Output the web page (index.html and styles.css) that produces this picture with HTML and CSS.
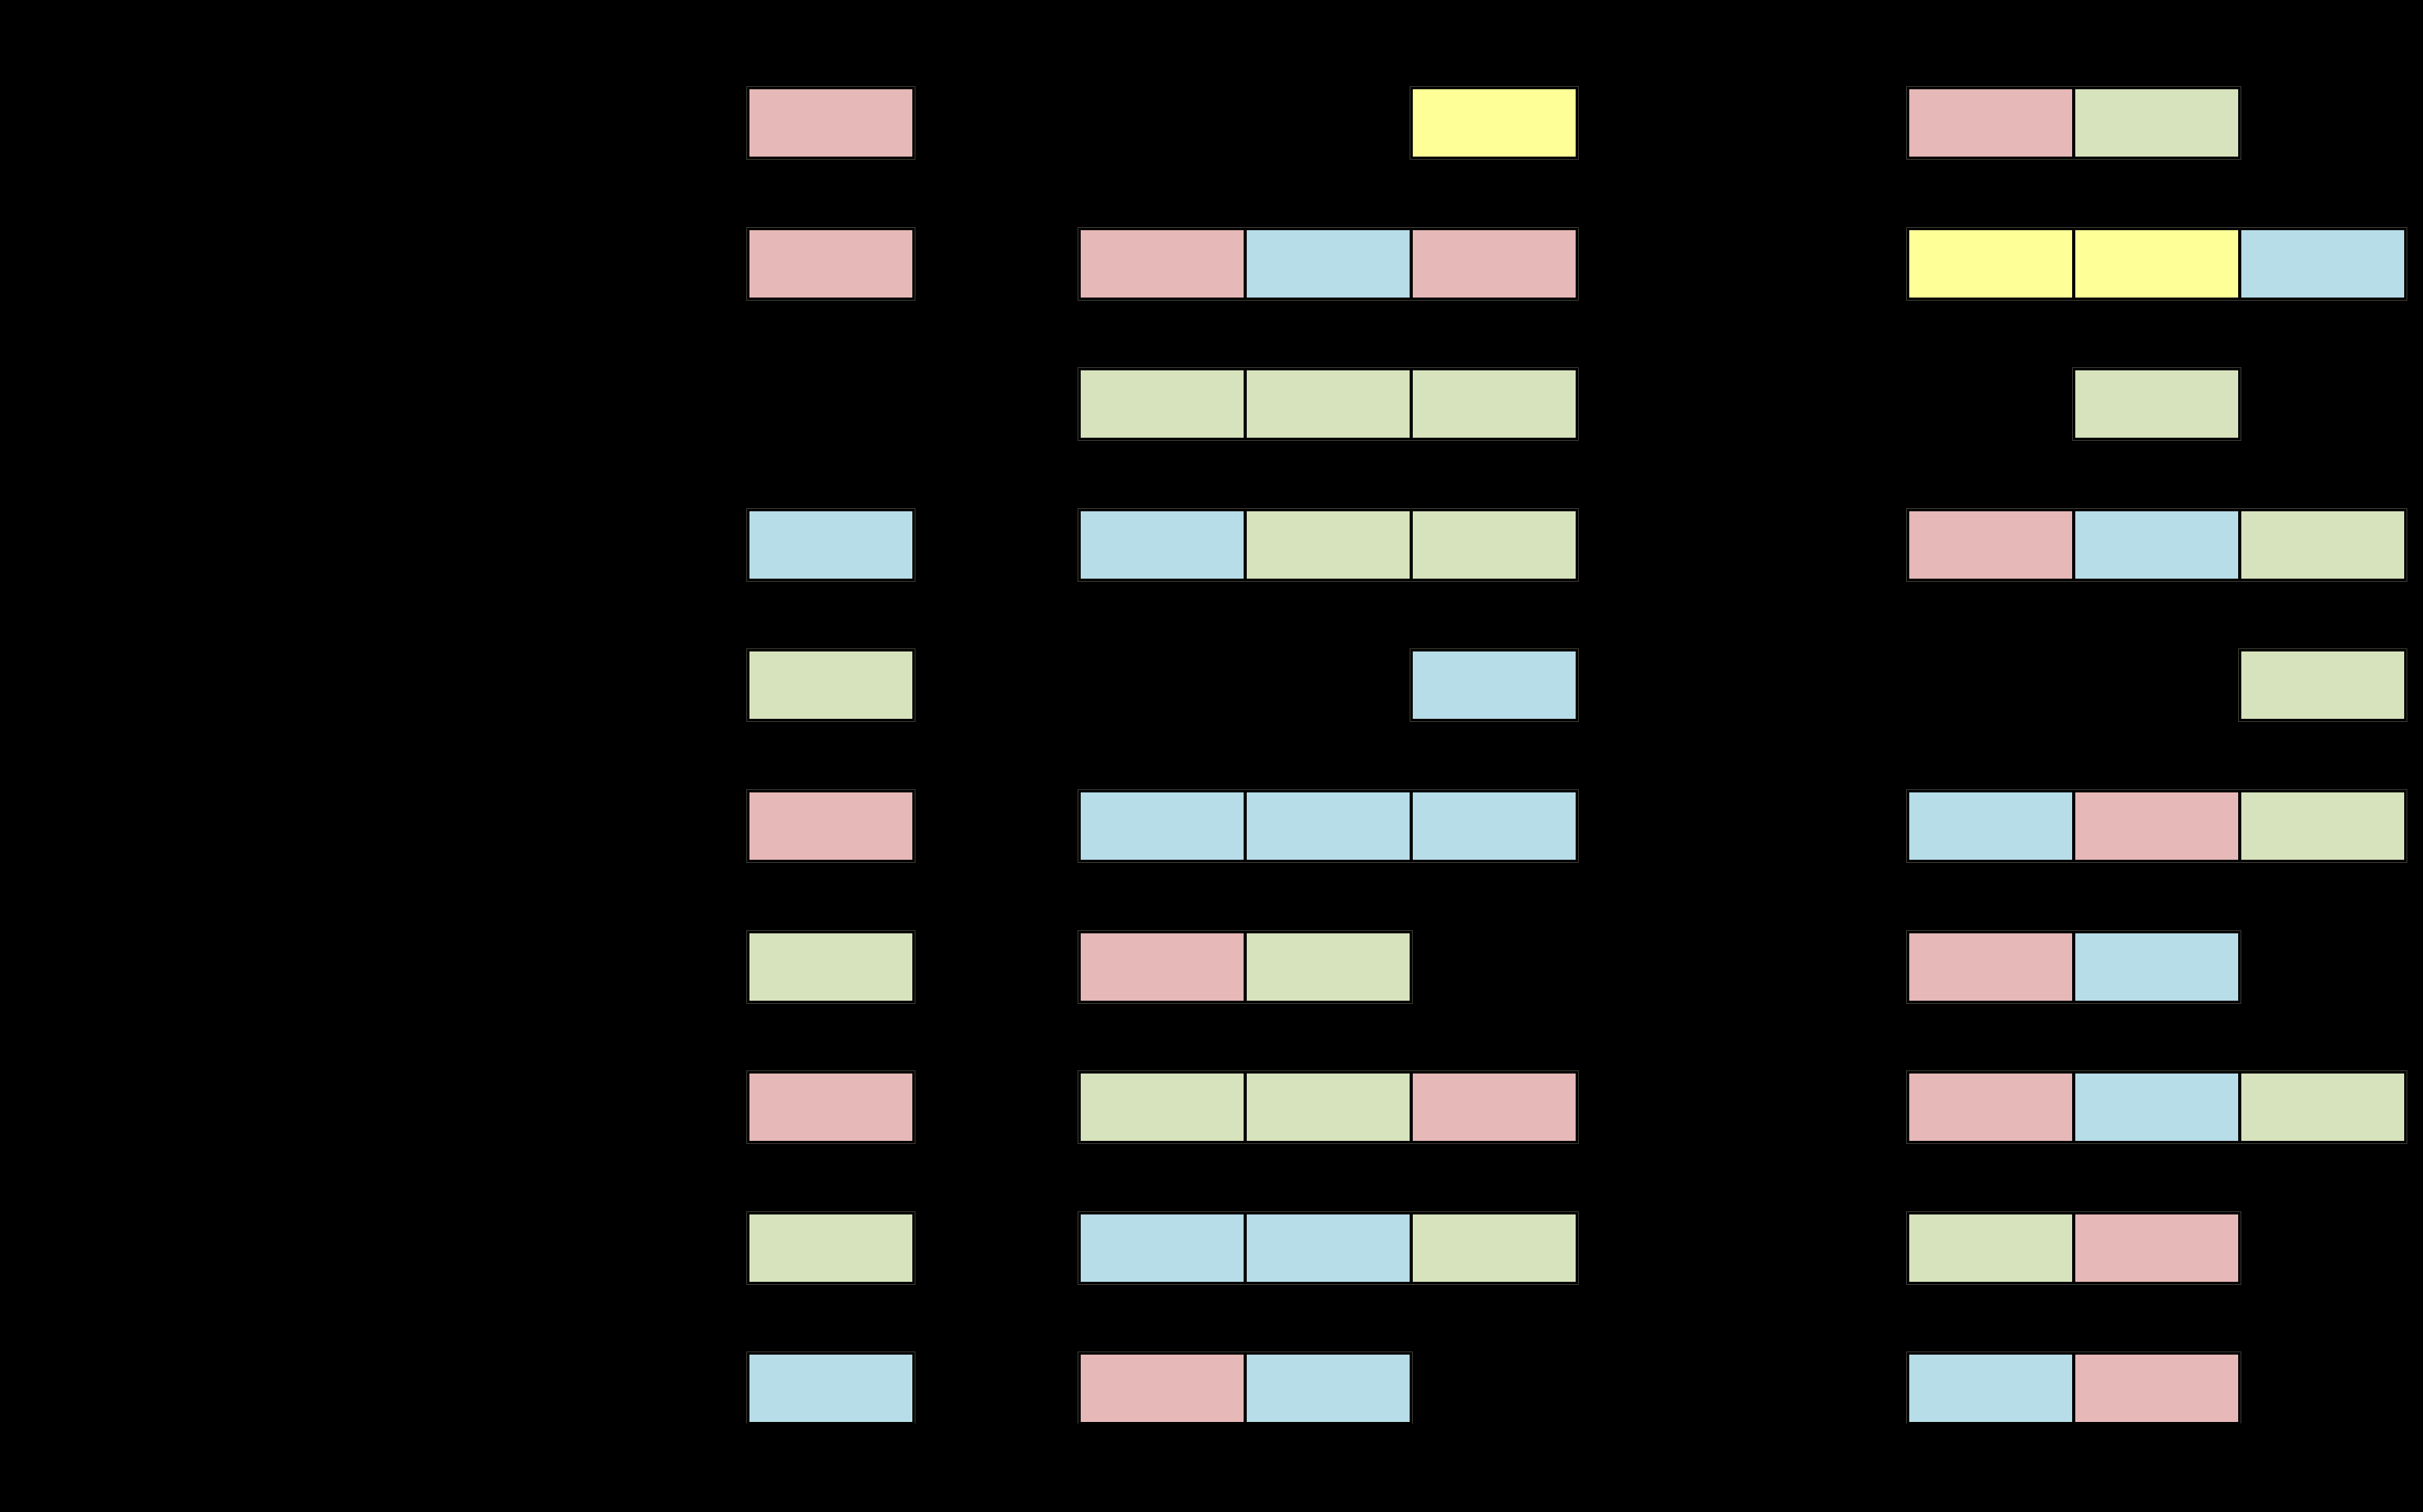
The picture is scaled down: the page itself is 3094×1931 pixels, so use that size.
FILE: index.html
```html
<!DOCTYPE html>
<html lang="en">
<head>
    <meta charset="UTF-8">
    <meta name="viewport" content="width=device-width, initial-scale=1.0">
    <title>Item Grid</title>
    <link rel="stylesheet" href="styles.css">
</head>
<body>

    <div class="board">
        <!-- row 1 -->
        <div class="row">
            <div class="label"></div>
            <div class="group one"><div class="run"><div class="cell pink"></div></div></div>
            <div class="group mid">
                <div class="cell empty"></div>
                <div class="cell empty"></div>
                <div class="run"><div class="cell yellow"></div></div>
            </div>
            <div class="group last">
                <div class="run"><div class="cell pink"></div><div class="cell green"></div></div>
                <div class="cell empty"></div>
            </div>
        </div>

        <!-- row 2 -->
        <div class="row">
            <div class="label"></div>
            <div class="group one"><div class="run"><div class="cell pink"></div></div></div>
            <div class="group mid">
                <div class="run"><div class="cell pink"></div><div class="cell blue"></div><div class="cell pink"></div></div>
            </div>
            <div class="group last">
                <div class="run"><div class="cell yellow"></div><div class="cell yellow"></div><div class="cell blue"></div></div>
            </div>
        </div>

        <!-- row 3 -->
        <div class="row">
            <div class="label"></div>
            <div class="group one"><div class="cell empty"></div></div>
            <div class="group mid">
                <div class="run"><div class="cell green"></div><div class="cell green"></div><div class="cell green"></div></div>
            </div>
            <div class="group last">
                <div class="cell empty"></div>
                <div class="run"><div class="cell green"></div></div>
                <div class="cell empty"></div>
            </div>
        </div>

        <!-- row 4 -->
        <div class="row">
            <div class="label"></div>
            <div class="group one"><div class="run"><div class="cell blue"></div></div></div>
            <div class="group mid">
                <div class="run"><div class="cell blue"></div><div class="cell green"></div><div class="cell green"></div></div>
            </div>
            <div class="group last">
                <div class="run"><div class="cell pink"></div><div class="cell blue"></div><div class="cell green"></div></div>
            </div>
        </div>

        <!-- row 5 -->
        <div class="row">
            <div class="label"></div>
            <div class="group one"><div class="run"><div class="cell green"></div></div></div>
            <div class="group mid">
                <div class="cell empty"></div>
                <div class="cell empty"></div>
                <div class="run"><div class="cell blue"></div></div>
            </div>
            <div class="group last">
                <div class="cell empty"></div>
                <div class="cell empty"></div>
                <div class="run"><div class="cell green"></div></div>
            </div>
        </div>

        <!-- row 6 -->
        <div class="row">
            <div class="label"></div>
            <div class="group one"><div class="run"><div class="cell pink"></div></div></div>
            <div class="group mid">
                <div class="run"><div class="cell blue"></div><div class="cell blue"></div><div class="cell blue"></div></div>
            </div>
            <div class="group last">
                <div class="run"><div class="cell blue"></div><div class="cell pink"></div><div class="cell green"></div></div>
            </div>
        </div>

        <!-- row 7 -->
        <div class="row">
            <div class="label"></div>
            <div class="group one"><div class="run"><div class="cell green"></div></div></div>
            <div class="group mid">
                <div class="run"><div class="cell pink"></div><div class="cell green"></div></div>
                <div class="cell empty"></div>
            </div>
            <div class="group last">
                <div class="run"><div class="cell pink"></div><div class="cell blue"></div></div>
                <div class="cell empty"></div>
            </div>
        </div>

        <!-- row 8 -->
        <div class="row">
            <div class="label"></div>
            <div class="group one"><div class="run"><div class="cell pink"></div></div></div>
            <div class="group mid">
                <div class="run"><div class="cell green"></div><div class="cell green"></div><div class="cell pink"></div></div>
            </div>
            <div class="group last">
                <div class="run"><div class="cell pink"></div><div class="cell blue"></div><div class="cell green"></div></div>
            </div>
        </div>

        <!-- row 9 -->
        <div class="row">
            <div class="label"></div>
            <div class="group one"><div class="run"><div class="cell green"></div></div></div>
            <div class="group mid">
                <div class="run"><div class="cell blue"></div><div class="cell blue"></div><div class="cell green"></div></div>
            </div>
            <div class="group last">
                <div class="run"><div class="cell green"></div><div class="cell pink"></div></div>
                <div class="cell empty"></div>
            </div>
        </div>

        <!-- row 10 -->
        <div class="row">
            <div class="label"></div>
            <div class="group one"><div class="run"><div class="cell blue"></div></div></div>
            <div class="group mid">
                <div class="run"><div class="cell pink"></div><div class="cell blue"></div></div>
                <div class="cell empty"></div>
            </div>
            <div class="group last">
                <div class="run"><div class="cell blue"></div><div class="cell pink"></div></div>
                <div class="cell empty"></div>
            </div>
        </div>
    </div>

</body>
</html>
```

FILE: styles.css
```css
body {
    margin: 0;
    background: #000;
    font-family: "Liberation Sans", Arial, sans-serif;
}

.board {
    display: flex;
    flex-direction: column;
    gap: 89.6px;
    padding-top: 112px;
}

.row {
    display: flex;
    height: 90px;
}

.label {
    width: 955px;
    flex: none;
}

.group {
    display: flex;
    flex: none;
}
.group.mid {
    margin-left: 211px;
}
.group.last {
    margin-left: 422px;
}

/* a run of touching cells gets the faint edge line */
.run {
    display: flex;
    outline: 1px solid #3d3c34;
    outline-offset: 1px;
}

.cell {
    box-sizing: border-box;
    width: 212px;
    height: 90px;
    border: 2px solid #000;
}
.cell.empty {
    border-color: transparent;
}
.pink {
    background: #e6b8b7;
}
.green {
    background: #d7e3bc;
}
.blue {
    background: #b7dde8;
}
.yellow {
    background: #ffff97;
}
```
